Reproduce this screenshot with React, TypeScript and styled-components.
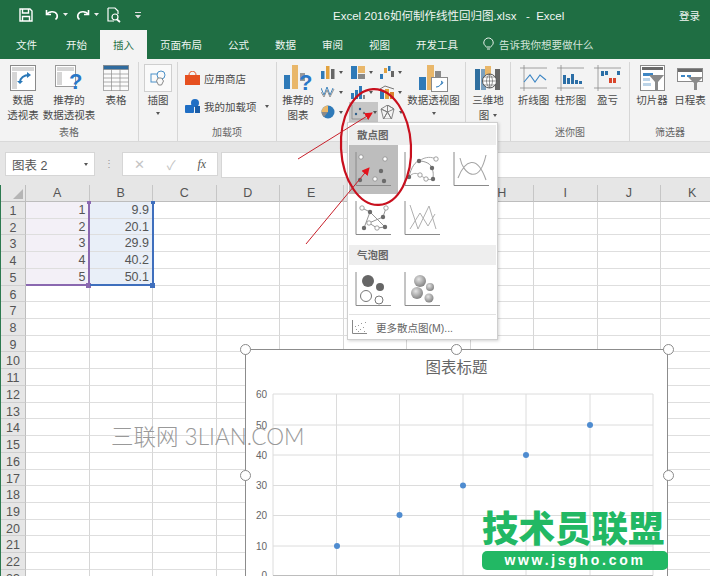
import React from "react";
import styled, { createGlobalStyle } from "styled-components";

const FONT = `"Liberation Sans", "Noto Sans CJK SC", sans-serif`;
const Global = createGlobalStyle`
  html, body { margin: 0; padding: 0; background: #fff; }
  body { font-family: ${FONT}; }
`;

const Frame = styled.div`
  position: relative; width: 710px; height: 576px; overflow: hidden;
  display: flex; flex-direction: column; background: #fff; color: #444;
`;
const TitleBar = styled.header`
  height: 30px; flex: none; background: #1f6e43; color: #f1f6f3; display: flex; align-items: center; font-size: 11.5px;
`;
const Qat = styled.div`
  width: 333px; flex: none; display: flex; align-items: center; padding-left: 19px; box-sizing: border-box; gap: 4px;
`;
const Spacer = styled.span<{ $w: number }>`width: ${p => p.$w}px; flex: none;`;
const Title = styled.div`white-space: pre;`;
const SignIn = styled.div`margin-left: auto; margin-right: 10px; font-size: 10.5px;`;
const TabStrip = styled.nav`
  height: 29px; flex: none; background: #1f6e43; display: flex; align-items: stretch; padding-left: 3px; font-size: 10.5px;
`;
const Tab = styled.div<{ $active?: boolean }>`
  padding: 0 13px 1px; display: flex; align-items: center;
  color: ${p => (p.$active ? "#1f6e43" : "#eef5f1")};
  background: ${p => (p.$active ? "#f3f3f3" : "transparent")};
  &:first-child { margin-right: 3px; }
`;
const TellMe = styled.div`
  margin-left: 12px; display: flex; align-items: center; gap: 5px; color: #d4e5db; padding-bottom: 1px;
`;
const Ribbon = styled.section`
  height: 83px; flex: none; background: #f3f3f3; display: flex; border-bottom: 1px solid #d9d9d9; box-sizing: border-box;
`;
const Group = styled.div<{ $w: number; $last?: boolean }>`
  width: ${p => p.$w}px; flex: none; box-sizing: border-box; position: relative;
  display: flex; flex-direction: column; height: 79px; margin-top: 3px;
  border-right: ${p => (p.$last ? "none" : "1px solid #d6d6d6")};
`;
const GroupBody = styled.div<{ $pad?: number }>`
  flex: 1; display: flex; align-items: flex-start; padding-left: ${p => p.$pad ?? 0}px; min-height: 0;
`;
const GroupName = styled.div`
  height: 17px; flex: none; line-height: 17px; text-align: center; font-size: 10px; color: #666;
`;
const BigButton = styled.div<{ $w: number }>`
  width: ${p => p.$w}px; flex: none; display: flex; flex-direction: column; align-items: center; padding-top: 1px;
  font-size: 10.5px; line-height: 14.5px; white-space: nowrap; color: #4a4a4a; text-align: center;
`;
const BigIcon = styled.div<{ $h?: number }>`
  height: ${p => p.$h ?? 30}px; display: flex; align-items: center; justify-content: center;
`;
const Caret = styled.span`
  display: block; width: 0; height: 0; border: 2px solid transparent; border-top: 3px solid #555; border-bottom: 0;
`;
const CaretLine = styled.div`height: 12px; display: flex; align-items: center; justify-content: center;`;
const InlineCaret = styled(Caret)`display: inline-block; margin-left: 4px; vertical-align: middle;`;
const PictureBox = styled.div`
  width: 26px; height: 26px; background: #fafafa; border: 1px solid #cfcfcf; display: flex; align-items: center; justify-content: center;
`;
const AddinColumn = styled.div`
  display: flex; flex-direction: column; gap: 10px; padding: 7px 0 0 7px; font-size: 10.5px; color: #4a4a4a; width: 100%; box-sizing: border-box;
`;
const AddinRow = styled.div`display: flex; align-items: center; gap: 4px; height: 18px; white-space: nowrap;`;
const ChartGrid = styled.div`
  display: grid; grid-template-columns: repeat(3, 29.5px); grid-template-rows: repeat(3, 20px);
`;
const ChartCell = styled.div<{ $on?: boolean }>`
  display: flex; align-items: center; gap: 4px; padding-left: 2px; background: ${p => (p.$on ? "#c6c6c6" : "transparent")};
`;
const FormulaArea = styled.div`
  height: 43px; flex: none; background: #e6e6e6; display: flex; align-items: flex-start; padding-left: 5px; padding-top: 10px; box-sizing: border-box;
`;
const NameBox = styled.div`
  width: 90px; height: 24px; background: #fff; border: 1px solid #d6d6d6; box-sizing: border-box; display: flex; align-items: center;
  justify-content: space-between; padding: 0 6px; font-size: 12.5px; color: #555;
`;
const Dots = styled.div`width: 27px; text-align: center; color: #999; font-size: 10px; line-height: 24px;`;
const FxBox = styled.div`
  width: 96px; height: 24px; background: #fff; border: 1px solid #d6d6d6; box-sizing: border-box; display: flex; align-items: center;
  justify-content: space-around; margin-right: 3px; color: #c4c4c4; font-size: 13px;
`;
const Fx = styled.i`font-family: "Liberation Serif", serif; color: #555; font-size: 12px;`;
const FormulaInput = styled.div`flex: 1; height: 24px; background: #fff; border: 1px solid #d6d6d6; border-right: none;`;
const Sheet = styled.div`
  flex: 1; display: grid; grid-template-columns: 25px repeat(11, 63.5px); grid-auto-rows: 16.72px; grid-template-rows: 17px;
  overflow: hidden; background: #fff; border-left: 1px solid #2d7a50; box-sizing: border-box;
`;
const Corner = styled.div`
  background: #e6e6e6; border-right: 1px solid #bdbdbd; border-bottom: 1px solid #bdbdbd; box-sizing: border-box;
  display: flex; align-items: flex-end; justify-content: flex-end; padding: 2px;
`;
const ColHead = styled.div`
  background: #e6e6e6; border-right: 1px solid #c6c6c6; border-bottom: 1px solid #bdbdbd; box-sizing: border-box;
  display: flex; align-items: center; justify-content: center; font-size: 12.5px; color: #555;
`;
const RowHead = styled.div`
  background: #e6e6e6; border-right: 1px solid #bdbdbd; border-bottom: 1px solid #cfcfcf; box-sizing: border-box;
  display: flex; align-items: flex-start; justify-content: center; font-size: 12.5px; line-height: 16px; padding-top: 1px; color: #555;
`;
const Cell = styled.div<{ $tone?: "a" | "b" }>`
  box-sizing: border-box; border-right: 1px solid #d6d6d6; border-bottom: 1.5px solid #dedede; font-size: 12.5px; color: #555;
  text-align: right; padding: 1px 3px 0 0; line-height: 15px;
  background: ${p => (p.$tone === "a" ? "#f3f0f7" : p.$tone === "b" ? "#e9eff8" : "#fff")};
`;
const RangeMark = styled.div<{ $x: number; $c: string }>`
  position: absolute; left: ${p => p.$x}px; top: 202px; width: 63.5px; height: 84px; box-sizing: border-box;
  border-right: 2px solid ${p => p.$c}; border-bottom: 2px solid ${p => p.$c};
  &::after { content: ""; position: absolute; right: -3.5px; bottom: -3.5px; width: 5px; height: 5px; background: ${p => p.$c}; }
  &::before { content: ""; position: absolute; right: -3px; top: -1px; width: 4px; height: 3px; background: ${p => p.$c}; }
`;
const ChartBox = styled.div`
  position: absolute; left: 245px; top: 349px; width: 423px; height: 240px; background: #fff; border: 1px solid #8c8c8c; box-sizing: border-box;
`;
const ChartTitle = styled.div`
  text-align: center; font-size: 15.5px; color: #666; line-height: 20px; padding-top: 8px;
`;
const PlotSvg = styled.svg`position: absolute; left: 0; top: 0; font-family: "Liberation Sans", sans-serif;`;
const Handle = styled.span<{ $x: number; $y: number }>`
  position: absolute; left: ${p => p.$x - 5.5}px; top: ${p => p.$y - 5.5}px; width: 11px; height: 11px; box-sizing: border-box;
  border-radius: 50%; background: #fff; border: 1.5px solid #8a8a8a;
`;
const Menu = styled.div`
  position: absolute; left: 347px; top: 122px; width: 151px; height: 218px; background: #fff; border: 1px solid #cfcfcf; box-sizing: border-box;
  box-shadow: 1px 1px 3px rgba(0,0,0,.18); padding-top: 2px; display: flex; flex-direction: column;
`;
const MenuHead = styled.div`
  height: 20px; flex: none; margin: 0 1px; background: #eeeeee; font-size: 10.5px; font-weight: 700; color: #666; padding-left: 8px; line-height: 20px;
`;
const TileRow = styled.div`display: flex; flex: none; padding-left: 1px;`;
const Tile = styled.div<{ $on?: boolean }>`
  width: 49px; height: 49px; flex: none; display: flex; align-items: center; justify-content: center;
  background: ${p => (p.$on ? "#bdbdbd" : "transparent")};
`;
const MenuGap = styled.div<{ $h: number }>`height: ${p => p.$h}px; flex: none;`;
const MenuLine = styled.div`height: 1px; flex: none; background: #e2e2e2; margin: 0 1px;`;
const MoreRow = styled.div`
  flex: 1; display: flex; align-items: center; gap: 9px; padding-left: 4px; font-size: 10.5px; color: #666; white-space: nowrap;
`;
const Overlay = styled.svg`position: absolute; left: 0; top: 0; pointer-events: none;`;
const Watermark = styled.div`
  position: absolute; left: 111px; top: 424px; font-size: 22.5px; line-height: 26px; color: #999; font-weight: 300; white-space: pre;
  font-family: "Lato", "Noto Sans CJK SC", sans-serif;
`;
const Logo = styled.div`
  position: absolute; left: 482px; top: 505px; width: 186px; display: flex; flex-direction: column; align-items: stretch;
`;
const LogoName = styled.div`
  font-size: 36.5px; line-height: 44px; font-weight: 900; color: #22b864; white-space: nowrap; font-family: "Noto Sans CJK SC", sans-serif;
`;
const LogoUrl = styled.div`
  height: 19px; margin-top: 2px; border-radius: 5px; background: #22b864; color: #fff; font-size: 14px; font-weight: 700; line-height: 19px;
  text-align: center; letter-spacing: 2.7px; font-family: "Liberation Sans", sans-serif;
`;

const Save = () => (<svg width="14" height="14" viewBox="0 0 14 14" fill="none" stroke="#fff" strokeWidth="1.4"><path d="M1 1h10l2 2v10H1z" /><path d="M3.5 1v4h6V1M3.5 13V8.5h7V13" /></svg>);
const Undo = () => (<svg width="14" height="12" viewBox="0 0 14 12" fill="none" stroke="#fff" strokeWidth="1.6"><path d="M1.5 1v4.5H6" /><path d="M1.5 5.5C4 2 10 1.5 12 5.5c.7 2 0 3.8-1.5 5" /></svg>);
const Redo = () => (<svg width="14" height="12" viewBox="0 0 14 12" fill="none" stroke="#fff" strokeWidth="1.6"><path d="M12.5 1v4.5H8" /><path d="M12.5 5.5C10 2 4 1.5 2 5.5c-.7 2 0 3.8 1.5 5" /></svg>);
const Preview = () => (<svg width="15" height="16" viewBox="0 0 15 16" fill="none" stroke="#fff" strokeWidth="1.2"><path d="M1 1h7l3 3v3M1 1v13h6" /><circle cx="8" cy="10" r="3" /><path d="M10 12.5l3 2.5" strokeWidth="1.8" /></svg>);
const MiniDrop = () => (<svg width="5" height="4" viewBox="0 0 5 4" fill="#eee"><path d="M0 0h5L2.5 3z" /></svg>);
const Customize = () => (<svg width="6" height="7" viewBox="0 0 6 7" fill="#ddd"><path d="M0 0h6v1H0zM0 3h6L3 6.5z" /></svg>);
const Bulb = () => (<svg width="11" height="14" viewBox="0 0 11 14" fill="none" stroke="#e9f2ec" strokeWidth="1"><path d="M3.5 10C1 8 .5 6.5.9 4.8 1.5 2.2 3.5 1 5.5 1s4 1.2 4.6 3.8C10.5 6.5 10 8 7.5 10zM4 12h3" /></svg>);

const Pivot = () => (
  <svg width="26" height="26" viewBox="0 0 26 26">
    <rect x=".5" y=".5" width="25" height="25" fill="#fff" stroke="#8a8a8a" />
    <rect x="2" y="2" width="22" height="4" fill="#d6d6d6" /><rect x="2" y="7" width="5" height="17" fill="#d6d6d6" />
    <path d="M10 17c0-4 4-7 9-7" fill="none" stroke="#2a78b8" strokeWidth="2" /><path d="M17 7l4 3-4 3zM7 16l3 3 3-3z" fill="#2a78b8" />
  </svg>
);
const PivotQ = () => (
  <svg width="28" height="27" viewBox="0 0 28 27">
    <rect x=".5" y=".5" width="20" height="21" fill="#fff" stroke="#9a9a9a" /><rect x="2" y="2" width="17" height="4" fill="#d6d6d6" /><rect x="2" y="7" width="5" height="13" fill="#d6d6d6" />
    <text x="14" y="24" fontFamily="Liberation Sans" fontSize="22" fontWeight="700" fill="#2a78c8">?</text>
  </svg>
);
const TableIcon = () => (
  <svg width="26" height="26" viewBox="0 0 26 26" fill="none" stroke="#8c8c8c" strokeWidth=".7">
    <rect x=".5" y=".5" width="25" height="25" fill="#fbfbfb" /><rect x=".5" y=".5" width="25" height="4" fill="#2f6b9e" />
    <path d="M.5 9h25M.5 13h25M.5 17h25M.5 21h25M8.5 4v22M17 4v22" />
  </svg>
);
const Shapes = () => (
  <svg width="17" height="16" viewBox="0 0 17 16" fill="none" stroke="#4a90c8" strokeWidth="1"><rect x="1" y="4" width="8" height="8" /><circle cx="11" cy="5" r="4" fill="#fafafa" /><path d="M8 8l3.5 0 2 3-2 4h-3L6.5 11z" fill="#fafafa" stroke="#888" /></svg>
);
const Bag = () => (<svg width="15" height="14" viewBox="0 0 15 14"><path d="M0 4h15v10H0z" fill="#e6501f" /><path d="M4 4c0-5 7-5 7 0" fill="none" stroke="#e6501f" /></svg>);
const Addin = () => (<svg width="15" height="14" viewBox="0 0 15 14"><rect x="0" y="6" width="9" height="8" rx="1" fill="#1f6ec4" /><circle cx="10" cy="4" r="4" fill="#1f6ec4" /><rect x="10" y="7" width="5" height="7" fill="#1a5da8" /></svg>);
const Recommend = () => (
  <svg width="28" height="26" viewBox="0 0 28 26"><rect x="0" y="10" width="6" height="14" fill="#2f7ab8" /><rect x="8" y="0" width="6" height="24" fill="#e9b76a" /><rect x="16" y="8" width="5" height="8" fill="#999" /><text x="15" y="25" fontFamily="Liberation Sans" fontSize="22" fontWeight="700" fill="#2a78c8">?</text></svg>
);
const Bars = () => (<svg width="14" height="13" viewBox="0 0 14 13"><rect x="0" y="5" width="3.5" height="8" fill="#2f7ab8" /><rect x="5" y="0" width="3.5" height="13" fill="#e2a23e" /><rect x="10" y="3" width="3.5" height="10" fill="#666" /></svg>);
const Lines = () => (<svg width="14" height="14" viewBox="0 0 14 14" fill="none" strokeWidth=".9"><path d="M0 3l3 7 3-8 3 8 3-7" stroke="#2f7ab8" /><path d="M0 7l3 5 3-7 3 7 4-8" stroke="#888" /></svg>);
const Pie = () => (<svg width="14" height="14" viewBox="0 0 14 14"><circle cx="7" cy="7" r="6.5" fill="#2f7ab8" /><path d="M7 7V.5A6.5 6.5 0 0 0 .5 7z" fill="#e9b76a" /><path d="M7 7H.5A6.5 6.5 0 0 0 3 12z" fill="#8a8a8a" /></svg>);
const Hier = () => (<svg width="14" height="13" viewBox="0 0 14 13"><rect x="0" y="0" width="6" height="13" fill="#2f7ab8" /><rect x="7" y="0" width="7" height="7" fill="#e9b76a" /><rect x="7" y="8" width="7" height="5" fill="#888" /></svg>);
const Cols = () => (<svg width="14" height="13" viewBox="0 0 14 13"><rect x="0" y="7" width="3" height="6" fill="#2f7ab8" /><rect x="4" y="4" width="3" height="9" fill="#2f7ab8" /><rect x="8" y="0" width="3" height="13" fill="#2f7ab8" /><rect x="12" y="9" width="2" height="4" fill="#888" /></svg>);
const Water = () => (<svg width="14" height="13" viewBox="0 0 14 13"><rect x="0" y="8" width="3" height="5" fill="#2f7ab8" /><rect x="4" y="2" width="3" height="5" fill="#e2a23e" /><rect x="8" y="0" width="2.5" height="5" fill="#2f7ab8" /><rect x="11" y="5" width="3" height="6" fill="#666" /></svg>);
const Combo = () => (<svg width="14" height="14" viewBox="0 0 14 14"><rect x="0" y="6" width="4" height="8" fill="#2f7ab8" /><rect x="5" y="4" width="4" height="10" fill="#e2a23e" /><rect x="10" y="7" width="4" height="7" fill="#d9812c" /><path d="M0 4l5-3 9 3" stroke="#777" fill="none" /></svg>);
const ScatterMini = () => (<svg width="18" height="15" viewBox="0 0 18 15" fill="none"><path d="M1 0v14h17" stroke="#888" strokeWidth=".8" /><circle cx="5" cy="9" r="1.2" fill="#2f5f8a" /><circle cx="9" cy="4" r="1.2" fill="#2f5f8a" /><circle cx="13" cy="8" r="1.2" fill="#777" /></svg>);
const Star = () => (<svg width="15" height="14" viewBox="0 0 15 14" fill="none" stroke="#7a7a7a" strokeWidth=".9"><path d="M7.5 0v7L1 4l6.5 3-4 7 4-7 4 7-4-7L14 4zM1 4l2.5 10h8L14 4 7.5 0z" /></svg>);
const PivotChart = () => (
  <svg width="29" height="27" viewBox="0 0 29 27"><rect x="0" y="12" width="7" height="13" fill="#2f7ab8" /><rect x="8" y="0" width="7" height="25" fill="#e9b76a" /><rect x="16" y="6" width="6" height="8" fill="#8a8a8a" /><rect x="12.5" y="12.5" width="16" height="14" fill="#fff" stroke="#8a8a8a" /><path d="M17 22c3 0 5-2 6-5M22 16l2 1.5-1.5 2" stroke="#2a78b8" fill="none" /></svg>
);
const Map3D = () => (
  <svg width="26" height="24" viewBox="0 0 26 24"><rect x="0" y="3" width="5" height="21" fill="#2f6f9f" /><rect x="6" y="3" width="5" height="21" fill="#7aa0bf" /><rect x="10" y="0" width="6" height="9" fill="#e9b76a" /><rect x="20" y="3" width="5" height="21" fill="#666" /><circle cx="14.5" cy="15" r="7" fill="#fff" stroke="#555" /><path d="M7.5 15h14M14.5 8v14M9 11h11M9 19h11M14.5 8c-4 4-4 10 0 14M14.5 8c4 4 4 10 0 14" fill="none" stroke="#555" strokeWidth=".6" /></svg>
);
const Spark = ({ kind }: { kind: "line" | "col" | "win" }) => (
  <svg width="27" height="26" viewBox="0 0 27 26" fill="none">
    <path d="M0 3h27M0 23h27M4 0v26" stroke="#8a8a8a" strokeWidth=".8" />
    {kind === "line" && <path d="M4 17l6-7 5 7 5-7 6 5" stroke="#3d86c4" strokeWidth="1.1" />}
    {kind === "col" && <g fill="#2b6ea6"><rect x="6" y="10" width="3" height="9" /><rect x="10" y="13" width="3" height="6" /><rect x="14" y="9" width="3" height="10" /><rect x="18" y="15" width="3" height="4" /><rect x="22" y="16" width="3" height="3" /></g>}
    {kind === "win" && <g><rect x="7" y="6" width="3" height="5" fill="#2b6ea6" /><rect x="11" y="6" width="3" height="4" fill="#2b6ea6" /><rect x="15" y="13" width="3" height="5" fill="#d9452b" /><rect x="19" y="13" width="3" height="5" fill="#d9452b" /><rect x="23" y="6" width="3" height="4" fill="#2b6ea6" /></g>}
  </svg>
);
const Slicer = () => (
  <svg width="25" height="26" viewBox="0 0 25 26"><rect x=".5" y=".5" width="24" height="25" fill="#fff" stroke="#8a8a8a" /><rect x="2" y="2" width="21" height="3" fill="#6a6a6a" /><rect x="3" y="8" width="10" height="3" fill="#3d86c4" /><rect x="3" y="13" width="7" height="3" fill="#bcd4e8" /><rect x="3" y="18" width="8" height="3" fill="#bcd4e8" /><path d="M9 10h15l-6 7v8h-3v-8z" fill="#8a8a8a" /></svg>
);
const Timeline = () => (
  <svg width="26" height="24" viewBox="0 0 26 24"><rect x=".5" y="2.5" width="25" height="13" fill="#fff" stroke="#8a8a8a" /><rect x="1" y="3" width="24" height="3" fill="#6a6a6a" /><rect x="4" y="9" width="4" height="2" fill="#3d86c4" /><rect x="10" y="9" width="4" height="2" fill="#3d86c4" /><path d="M11 11h15l-6 6v7h-3v-7z" fill="#8a8a8a" /></svg>
);

type Dot = [number, number, boolean?];
const TileFrame = ({ children }: { children: React.ReactNode }) => (
  <svg width="37" height="35" viewBox="0 0 37 35" fill="none">
    <path d="M1 0v33.5h35" stroke="#8a8a8a" strokeWidth="1" />
    {children}
  </svg>
);
const Dots2 = ({ d }: { d: Dot[] }) => (<>{d.map(([x, y, o], i) => o ? <circle key={i} cx={x} cy={y} r="2.2" fill="#fff" stroke="#8a8a8a" strokeWidth=".8" /> : <circle key={i} cx={x} cy={y} r="2.2" fill="#6b6b6b" />)}</>);

const Tile1 = () => <TileFrame><Dots2 d={[[6, 5, true], [30, 7, true], [26, 19], [20, 27, true], [29, 29], [5, 28]]} /></TileFrame>;
const Tile2 = () => <TileFrame><path d="M5 25C7 15 12 9 15 9S26 10 28 16 29 24 29 27" stroke="#999" /><path d="M5 25C9 20 13 21 16 23S24 29 29 27M15 9C22 4 28 5 32 7" stroke="#aaa" /><Dots2 d={[[15, 9], [32, 7, true], [28, 16], [29, 27], [16, 23, true], [22, 27, true], [5, 25]]} /></TileFrame>;
const Tile3 = () => <TileFrame><path d="M7 6C10 22 26 34 33 3M5 26C12 8 24 2 33 28" stroke="#a5a5a5" strokeWidth="1.1" /></TileFrame>;
const Tile4 = () => <TileFrame><path d="M7 7L15 11 30 26 22 27 14 22 28 16 31 7M15 11L9 27" stroke="#8a8a8a" strokeWidth=".9" /><Dots2 d={[[7, 7, true], [15, 11], [31, 7, true], [28, 16], [14, 22, true], [22, 27, true], [9, 27], [30, 26]]} /></TileFrame>;
const Tile5 = () => <TileFrame><path d="M6 4L14 28 25 5 32 28M6 28L16 12 24 25 31 13" stroke="#b0b0b0" strokeWidth="1" /></TileFrame>;
const Tile6 = () => <TileFrame><circle cx="13" cy="9" r="6" fill="#666" /><circle cx="25" cy="15" r="4" fill="#666" /><circle cx="11" cy="24" r="5.5" fill="#fff" stroke="#777" /><circle cx="24" cy="28" r="4" fill="#fff" stroke="#777" /></TileFrame>;
const Tile7 = () => (
  <svg width="37" height="35" viewBox="0 0 37 35" fill="none">
    <defs><radialGradient id="ball" cx=".4" cy=".35" r=".7"><stop offset="0" stopColor="#e4e4e4" /><stop offset="1" stopColor="#7d7d7d" /></radialGradient></defs>
    <path d="M1 0v33.5h35" stroke="#8a8a8a" />
    <circle cx="16" cy="9" r="6" fill="url(#ball)" /><circle cx="26" cy="15" r="4" fill="url(#ball)" /><circle cx="13" cy="21" r="6" fill="url(#ball)" /><circle cx="25" cy="26" r="4.5" fill="url(#ball)" />
  </svg>
);
const MoreIcon = () => (
  <svg width="15" height="14" viewBox="0 0 15 14" fill="none"><path d="M.5 0v13.5H15" stroke="#888" /><g fill="#999">{[[4, 9], [6, 5], [8, 9], [9, 3], [11, 7], [13, 2], [12, 11], [6, 11], [3, 6]].map(([x, y]) => <rect key={`${x}-${y}`} x={x} y={y} width="1" height="1" />)}</g></svg>
);

const COLS = ["A", "B", "C", "D", "E", "F", "G", "H", "I", "J", "K"];
const DATA: Record<number, [string, string]> = { 1: ["1", "9.9"], 2: ["2", "20.1"], 3: ["3", "29.9"], 4: ["4", "40.2"], 5: ["5", "50.1"] };
const ROWS = Array.from({ length: 23 }, (_, i) => i + 1);

const PL = 27, PR = 407, P0 = 225.5;
const xs = [90.5, 153.5, 217, 280, 344];
const ys = [44, 75, 105, 135.5, 165.5, 196, 225.5];
const pts: [number, number][] = [[91, 196], [153.5, 165], [217, 135.5], [280, 105], [344, 75]];

export default function App() {
  return (
    <Frame>
      <Global />
      <TitleBar>
        <Qat>
          <Save />
          <Spacer $w={4} />
          <Undo /><MiniDrop />
          <Spacer $w={0} />
          <Redo /><MiniDrop />
          <Spacer $w={0} />
          <Preview />
          <Spacer $w={5} />
          <Customize />
        </Qat>
        <Title>Excel 2016如何制作线性回归图.xlsx   -  Excel</Title>
        <SignIn>登录</SignIn>
      </TitleBar>
      <TabStrip>
        <Tab>文件</Tab><Tab>开始</Tab><Tab $active>插入</Tab><Tab>页面布局</Tab><Tab>公式</Tab><Tab>数据</Tab><Tab>审阅</Tab><Tab>视图</Tab><Tab>开发工具</Tab>
        <TellMe><Bulb />告诉我你想要做什么</TellMe>
      </TabStrip>
      <Ribbon>
        <Group $w={139}>
          <GroupBody $pad={1}>
            <BigButton $w={44}><BigIcon><Pivot /></BigIcon>数据<br />透视表</BigButton>
            <BigButton $w={48}><BigIcon><PivotQ /></BigIcon>推荐的<br />数据透视表</BigButton>
            <BigButton $w={46}><BigIcon><TableIcon /></BigIcon>表格</BigButton>
          </GroupBody>
          <GroupName>表格</GroupName>
        </Group>
        <Group $w={39}>
          <GroupBody>
            <BigButton $w={38}><BigIcon><PictureBox><Shapes /></PictureBox></BigIcon>插图<CaretLine><Caret /></CaretLine></BigButton>
          </GroupBody>
          <GroupName>&nbsp;</GroupName>
        </Group>
        <Group $w={99}>
          <GroupBody>
            <AddinColumn>
              <AddinRow><Bag />应用商店</AddinRow>
              <AddinRow><Addin />我的加载项<InlineCaret /></AddinRow>
            </AddinColumn>
          </GroupBody>
          <GroupName>加载项</GroupName>
        </Group>
        <Group $w={189}>
          <GroupBody>
            <BigButton $w={42}><BigIcon><Recommend /></BigIcon>推荐的<br />图表</BigButton>
            <ChartGrid>
              <ChartCell><Bars /><Caret /></ChartCell><ChartCell><Hier /><Caret /></ChartCell><ChartCell><Water /><Caret /></ChartCell>
              <ChartCell><Lines /><Caret /></ChartCell><ChartCell><Cols /><Caret /></ChartCell><ChartCell><Combo /><Caret /></ChartCell>
              <ChartCell><Pie /><Caret /></ChartCell><ChartCell $on><ScatterMini /><Caret /></ChartCell><ChartCell><Star /><Caret /></ChartCell>
            </ChartGrid>
            <BigButton $w={52}><BigIcon><PivotChart /></BigIcon>数据透视图<CaretLine><Caret /></CaretLine></BigButton>
          </GroupBody>
          <GroupName>&nbsp;</GroupName>
        </Group>
        <Group $w={45}>
          <GroupBody>
            <BigButton $w={44}><BigIcon><Map3D /></BigIcon>三维地<br /><span>图<InlineCaret /></span></BigButton>
          </GroupBody>
          <GroupName>&nbsp;</GroupName>
        </Group>
        <Group $w={119}>
          <GroupBody $pad={4}>
            <BigButton $w={37}><BigIcon><Spark kind="line" /></BigIcon>折线图</BigButton>
            <BigButton $w={37}><BigIcon><Spark kind="col" /></BigIcon>柱形图</BigButton>
            <BigButton $w={37}><BigIcon><Spark kind="win" /></BigIcon>盈亏</BigButton>
          </GroupBody>
          <GroupName>迷你图</GroupName>
        </Group>
        <Group $w={80} $last>
          <GroupBody $pad={3}>
            <BigButton $w={38}><BigIcon><Slicer /></BigIcon>切片器</BigButton>
            <BigButton $w={38}><BigIcon><Timeline /></BigIcon>日程表</BigButton>
          </GroupBody>
          <GroupName>筛选器</GroupName>
        </Group>
      </Ribbon>
      <FormulaArea>
        <NameBox>图表 2<Caret /></NameBox>
        <Dots>⋮</Dots>
        <FxBox><span>✕</span><span>✓</span><Fx>fx</Fx></FxBox>
        <FormulaInput />
      </FormulaArea>
      <Sheet>
        <Corner><svg width="10" height="10" viewBox="0 0 10 10"><path d="M10 0v10H0z" fill="#b5b5b5" /></svg></Corner>
        {COLS.map(c => <ColHead key={c}>{c}</ColHead>)}
        {ROWS.map(r => (
          <React.Fragment key={r}>
            <RowHead>{r}</RowHead>
            {COLS.map((c, i) => (
              <Cell key={c} $tone={DATA[r] && i === 0 ? "a" : DATA[r] && i === 1 ? "b" : undefined}>
                {DATA[r] && i < 2 ? DATA[r][i] : ""}
              </Cell>
            ))}
          </React.Fragment>
        ))}
      </Sheet>
      <RangeMark $x={26} $c="#8a68b0" />
      <RangeMark $x={90} $c="#3f6fbd" />
      <ChartBox>
        <ChartTitle>图表标题</ChartTitle>
        <PlotSvg width="423" height="240" viewBox="0 0 423 240">
          <g stroke="#dcdcdc" strokeWidth="1">
            {ys.map(y => <line key={y} x1={PL} x2={PR} y1={y} y2={y} />)}
            <line x1={PL} x2={PL} y1={44} y2={P0} />
            <line x1={PR} x2={PR} y1={44} y2={P0} />
            {xs.map(x => <line key={x} x1={x} x2={x} y1={44} y2={P0} />)}
          </g>
          <line x1={PL} x2={PR} y1={P0} y2={P0} stroke="#bdbdbd" />
          {[60, 50, 40, 30, 20, 10, 0].map((v, i) => (
            <text key={v} x={21} y={ys[i] + 3.5} fontSize="10" fill="#666" textAnchor="end">{v}</text>
          ))}
          {pts.map(([x, y]) => <circle key={x} cx={x} cy={y} r="3" fill="#4f8cd0" />)}
        </PlotSvg>
      </ChartBox>
      <Handle $x={245} $y={349} /><Handle $x={456} $y={349} /><Handle $x={668} $y={349} />
      <Handle $x={245} $y={475} /><Handle $x={668} $y={475} />
      <Menu>
        <MenuHead>散点图</MenuHead>
        <TileRow><Tile $on><Tile1 /></Tile><Tile><Tile2 /></Tile><Tile><Tile3 /></Tile></TileRow>
        <TileRow><Tile><Tile4 /></Tile><Tile><Tile5 /></Tile></TileRow>
        <MenuGap $h={2} />
        <MenuHead>气泡图</MenuHead>
        <TileRow><Tile><Tile6 /></Tile><Tile><Tile7 /></Tile></TileRow>
        <MenuLine />
        <MoreRow><MoreIcon />更多散点图(M)...</MoreRow>
      </Menu>
      <Watermark>三联网 3LIAN.COM</Watermark>
      <Logo>
        <LogoName>技术员联盟</LogoName>
        <LogoUrl>www.jsgho.com</LogoUrl>
      </Logo>
      <Overlay width="710" height="576" viewBox="0 0 710 576" fill="none">
        <defs>
          <marker id="tip" markerWidth="9" markerHeight="9" refX="7" refY="4" orient="auto"><path d="M0 0L8 4 0 8z" fill="#e3131c" /></marker>
        </defs>
        <ellipse cx="376" cy="147" rx="35" ry="58" stroke="#c8101e" strokeWidth="2.2" transform="rotate(-3 376 147)" />
        <line x1="298" y1="159" x2="372" y2="113" stroke="#c8202a" strokeWidth="1" markerEnd="url(#tip)" />
        <line x1="306" y1="244" x2="369" y2="168" stroke="#c8202a" strokeWidth="1" markerEnd="url(#tip)" />
      </Overlay>
    </Frame>
  );
}
